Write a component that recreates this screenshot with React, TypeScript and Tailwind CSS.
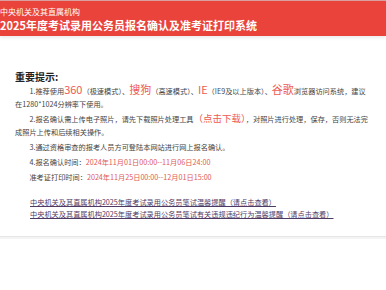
import React from 'react'

const font = { fontFamily: '"Noto Sans CJK SC", "Noto Sans", sans-serif' }

const Big = ({ children }: { children: React.ReactNode }) => (
  <span className="text-[11px] leading-[11px] text-[#ee5a52]">{children}</span>
)

const App = () => {
  return (
    <div className="min-h-[290px] bg-white" style={font}>
      {/* Header */}
      <div className="h-[36px] bg-[#e9433c] border-t border-[#d9a0a0] text-white shadow-[0_2px_3px_rgba(0,0,0,0.08)]">
        <div className="pt-[5px] text-[8px] leading-[12px]">中央机关及其直属机构</div>
        <div className="text-[11px] font-bold leading-[14px]">2025年度考试录用公务员报名确认及准考证打印系统</div>
      </div>

      {/* Main Content */}
      <div className="pl-[15px] pr-[18px] pt-[34px] text-[7.2px] leading-[13px] text-[#444]">
        <h3 className="text-[10px] font-bold leading-[14px] text-[#222]">重要提示:</h3>

        <p className="indent-[2em] mb-[2px]">
          1.推荐使用<Big>360</Big>（极速模式）、<Big>搜狗</Big>（高速模式）、<Big>IE</Big>（IE9及以上版本）、<Big>谷歌</Big>浏览器访问系统，建议在1280*1024分辨率下使用。
        </p>
        <p className="indent-[2em] mb-[2px]">
          2.报名确认需上传电子照片，请先下载照片处理工具<span className="text-[9.5px] leading-[11px] text-[#ee5a52]">（点击下载）</span>，对照片进行处理，保存，否则无法完成照片上传和后续相关操作。
        </p>
        <p className="indent-[2em] mb-[2px]">3.通过资格审查的报考人员方可登陆本网站进行网上报名确认。</p>
        <p className="indent-[2em] mb-[2px]">
          4.报名确认时间：<span className="text-[#e05a55]">2024年11月01日00:00--11月06日24:00</span>
        </p>
        <p className="indent-[2em]">
          准考证打印时间：<span className="text-[#e05a55]">2024年11月25日00:00--12月01日15:00</span>
        </p>

        <div className="mt-[12px] pl-[15px] leading-[12px] text-[#4f3a66]">
          <div>
            <a href="#" className="underline">中央机关及其直属机构2025年度考试录用公务员笔试温馨提醒（请点击查看）</a>
          </div>
          <div>
            <a href="#" className="underline">中央机关及其直属机构2025年度考试录用公务员笔试有关违规违纪行为温馨提醒（请点击查看）</a>
          </div>
        </div>
      </div>

      {/* Footer line */}
      <div className="mt-[16px] h-[3px] border-t border-[#e6e6e6] bg-[#f4f4f4]" />
    </div>
  )
}

export default App
